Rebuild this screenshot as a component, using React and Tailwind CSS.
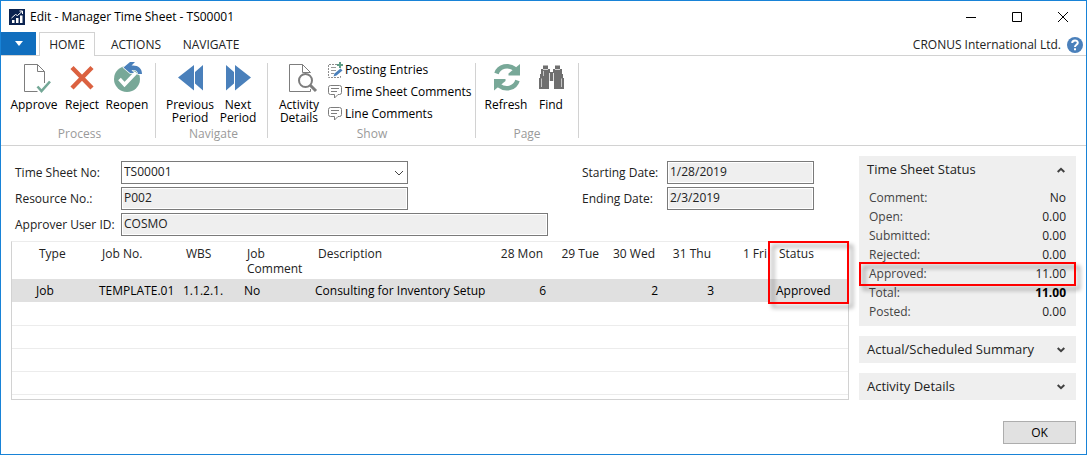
import React from 'react';

const Svg = ({ children, size = 32 }) => (
  <svg width={size} height={size} viewBox={`0 0 ${size} ${size}`} fill="none" className="shrink-0 overflow-visible" aria-hidden="true">
    {children}
  </svg>
);

const ApproveIcon = () => (
  <Svg>
    <path d="M19.5 30.5H6.5V3.5H19.5L26.5 10.5V22M19.5 3.5V10.5H26.5" stroke="#7d7d7d" />
    <path d="M19.5 25.5L23.5 30L32 20.5" stroke="#74a897" strokeWidth="2.6" />
  </Svg>
);
const RejectIcon = () => (
  <Svg>
    <path d="M6 6.500L26 27M26 6.500L6 27" stroke="#db6140" strokeWidth="4.4" />
  </Svg>
);
const ReopenIcon = () => (
  <Svg>
    <circle cx="16" cy="18" r="13" fill="#78a898" />
    <path d="M8.5 18L13.5 23.5L25 11.5" stroke="#fff" strokeWidth="3.6" />
    <path
      d="M12.5 6.5L19 1H24L20.5 4.5C27 4 31 7 31 13H27C26.5 9.5 24.5 8.5 20.5 9L23 12H19Z"
      fill="#4a80bb" stroke="#fff" strokeWidth="1.4" paintOrder="stroke"
    />
  </Svg>
);
const PreviousIcon = () => (
  <Svg>
    <path d="M4 16.5L20 4V29.5ZM21 11L29 4V29.5L21 22.5Z" fill="#4a80bb" />
  </Svg>
);
const NextIcon = () => (
  <Svg>
    <path d="M29 16.5L13 4V29.5ZM12 11L4 4V29.5L12 22.5Z" fill="#4a80bb" />
  </Svg>
);
const ActivityIcon = () => (
  <Svg>
    <path d="M27.5 28V30.5H6.5V3.5H19.5L27.5 11.5H19.5V3.5" stroke="#7d7d7d" />
    <circle cx="22.5" cy="19.5" r="6.5" stroke="#7d7d7d" strokeWidth="2" fill="#fff" />
    <path d="M27 24L33 30" stroke="#7d7d7d" strokeWidth="3" />
  </Svg>
);
const RefreshIcon = () => (
  <Svg>
    <path d="M6.500 12.500C9 5 18.500 3 25 8" stroke="#78a898" strokeWidth="4.6" />
    <path d="M30 3V14.500H18.500V12.500Z" fill="#78a898" />
    <path d="M27.500 19.500C25 27.500 15.500 29.500 9 24.500" stroke="#78a898" strokeWidth="4.6" />
    <path d="M4 29.500V18H15.500V20Z" fill="#78a898" />
  </Svg>
);
const FindIcon = () => (
  <Svg>
    <path
      d="M8 4.500H13V8H15V11H18V8H20V4.500H25V8H27V13H28V17H29V28H19V20H14V28H4V17H5V13H6V8H8Z"
      fill="#6f6f6f"
    />
    <path d="M14.500 12V20M18.500 12V20" stroke="#fff" strokeWidth=".8" />
    <path d="M8 8.500H13M20 8.500H25" stroke="#fff" strokeWidth=".7" />
    <path d="M6.500 17.500V26M8.500 10V15M26.500 17.500V26" stroke="#fff" strokeWidth=".6" />
  </Svg>
);
const PostingIcon = () => (
  <Svg size={16}>
    <path d="M9 2.5H.5V15.5H12.5V13" stroke="#8d8d8d" strokeDasharray="2 1" />
    <path d="M3 5.5H8M3 8.5H8M3 11.5H6" stroke="#9a9a9a" />
    <path d="M12 0V6M9 3H15" stroke="#5f9d86" strokeWidth="2" />
    <path d="M5.5 14.5L6.5 11.5L12.5 6.5L14.5 8.5L8.5 13.5Z" fill="#4a80bb" />
  </Svg>
);
const CommentIcon = () => (
  <Svg size={16}>
    <path
      d="M2.5 1.5H11.5Q13.5 1.5 13.5 3.5V8.5Q13.5 10.5 11.5 10.5H10L6.5 14V10.5H2.5Q.5 10.5 .5 8.5V3.5Q.5 1.5 2.5 1.5Z"
      stroke="#7d7d7d"
    />
    <path d="M3 4.5H11M3 7.5H9" stroke="#7d7d7d" />
  </Svg>
);
const Chevron = ({ up }) => (
  <svg width="8" height="6" viewBox="0 0 8 6" fill="none" aria-hidden="true">
    <path d={up ? 'M.7 5L4 1.8L7.3 5' : 'M.7 1L4 4.2L7.3 1'} stroke="#404040" strokeWidth="2" />
  </svg>
);

const Tool = ({ icon, width = 'w-12', children }) => (
  <button type="button" className={`flex flex-col items-center gap-[5px] text-center leading-[13px] ${width}`}>
    {icon}
    <span>{children}</span>
  </button>
);
const SmallTool = ({ icon, children }) => (
  <button type="button" className="flex h-[22px] items-center gap-px whitespace-nowrap">
    {icon}
    <span>{children}</span>
  </button>
);
const Group = ({ label, className, children }) => (
  <section className={`flex flex-col justify-between border-r border-[#d2d2d2] ${className}`}>
    <div className="-mt-0.5 flex h-16">{children}</div>
    <h2 className="pr-1.5 text-center leading-[8px] text-[#9a9a9a]">{label}</h2>
  </section>
);

const Field = ({ id, label, value, labelWidth, width }) => (
  <div className="flex items-center">
    <label htmlFor={id} className={`shrink-0 ${labelWidth}`}>{label}</label>
    <input
      id={id}
      readOnly
      value={value}
      className={`h-[23px] min-w-0 border border-[#7a7a7a] bg-[#efefef] px-0.5 pb-0.5 shadow-[inset_0_0_0_1px_#fff] outline-none ${width}`}
    />
  </div>
);

const columns = [
  ['Type', 'w-[84px]'], ['Job No.', 'w-[84px]'], ['WBS', 'w-[61px]'], ['Job Comment', 'w-[71px]'], ['Description', ''],
  ['28 Mon', 'w-[56px]'], ['29 Tue', 'w-[56px]'], ['30 Wed', 'w-[56px]'], ['31 Thu', 'w-[56px]'], ['1 Fri', 'w-[56px]'],
  ['Status', 'w-[75px]'],
];
const line = ['Job', 'TEMPLATE.01', '1.1.2.1.', 'No', 'Consulting for Inventory Setup', '6', '', '2', '3', '', 'Approved'];
const isDay = (i) => i > 4 && i < 10;

const status = [
  ['Comment:', 'No'], ['Open:', '0.00'], ['Submitted:', '0.00'], ['Rejected:', '0.00'],
  ['Approved:', '11.00'], ['Total:', '11.00'], ['Posted:', '0.00'],
];

const callout = 'pointer-events-none absolute border-2 border-[#f00] drop-shadow-[4px_4px_2px_rgba(0,0,0,0.4)]';

const PanelHead = ({ title, open }) => (
  <button type="button" aria-expanded={!!open} className="flex h-[27px] w-full items-center justify-between pr-[11px] pl-2 text-[13px]">
    <span>{title}</span>
    <Chevron up={open} />
  </button>
);

export default function App() {
  return (
    <div className="flex min-h-screen flex-col border border-[#1883d7] bg-white font-['Open_Sans','Noto_Sans',sans-serif] text-[12px] text-black">
      <header className="flex h-[31px] items-center justify-between pr-[18px] pl-2">
        <div className="flex items-center gap-[5px]">
          <Svg size={16}>
            <rect width="16" height="16" fill="#0b2350" />
            <path d="M3 14V11H5.500V14ZM7 14V9H9.500V14ZM11 14V6.500H13.500V14Z" fill="#fff" />
            <path d="M2.500 9L6.500 5.500L8.500 6.500L13 2.500M10.500 2H13.500V5" stroke="#fff" />
          </Svg>
          <h1>Edit - Manager Time Sheet - TS00001</h1>
        </div>
        <div className="flex items-center gap-[36px]">
          <button type="button" aria-label="Minimize"><svg width="10" height="10" className="block"><path d="M0 5.5H10" stroke="#000" /></svg></button>
          <button type="button" aria-label="Maximize"><svg width="10" height="10" className="block"><path d="M.5 .5H9.5V9.5H.5Z" fill="none" stroke="#000" /></svg></button>
          <button type="button" aria-label="Close"><svg width="10" height="10" className="block"><path d="M0 0L10 10M10 0L0 10" stroke="#000" /></svg></button>
        </div>
      </header>

      <nav className="flex h-6 items-stretch border-b border-[#d2d2d2]">
        <button type="button" aria-label="Application menu" className="flex w-[35px] items-center justify-center bg-[#106ebe]">
          <svg width="8" height="5"><path d="M0 0H8L4 5Z" fill="#fff" /></svg>
        </button>
        <button type="button" className="-mb-px ml-[3px] w-14 border border-b-0 border-[#d2d2d2] bg-white pt-px text-[#222]">HOME</button>
        <button type="button" className="ml-[11px] w-[60px] pt-[3px] text-[#222]">ACTIONS</button>
        <button type="button" className="ml-3 w-[66px] pt-[3px] text-[#222]">NAVIGATE</button>
        <div className="ml-auto flex items-center gap-1.5 pt-[3px] pr-[3px] text-[#222]">
          <span>CRONUS International Ltd.</span>
          <button type="button" aria-label="Help">
            <svg width="16" height="16" viewBox="0 0 16 16" fill="none" className="block">
              <circle cx="8" cy="8" r="8" fill="#4a80bb" />
              <path d="M5.2 6C5.2 2.6 10.8 2.6 10.8 5.8C10.8 7.8 8 7.7 8 10" stroke="#fff" strokeWidth="2" />
              <path d="M7 11.2H9V13.2H7Z" fill="#fff" />
            </svg>
          </button>
        </div>
      </nav>

      <div className="flex border-b border-[#d2d2d2] pt-[7px] pb-[7px]">
        <Group label="Process" className="h-[75px] w-[155px] pl-[9px]">
          <Tool icon={<ApproveIcon />}>Approve</Tool>
          <Tool icon={<RejectIcon />}>Reject</Tool>
          <Tool icon={<ReopenIcon />} width="w-[42px]">Reopen</Tool>
        </Group>
        <Group label="Navigate" className="w-28 pl-2.5">
          <Tool icon={<PreviousIcon />}>Previous Period</Tool>
          <Tool icon={<NextIcon />}>Next Period</Tool>
        </Group>
        <Group label="Show" className="w-[208px] pl-[7px]">
          <Tool icon={<ActivityIcon />}>Activity Details</Tool>
          <div className="-mt-0.5 ml-[5px]">
            <SmallTool icon={<PostingIcon />}>Posting Entries</SmallTool>
            <SmallTool icon={<CommentIcon />}>Time Sheet Comments</SmallTool>
            <SmallTool icon={<CommentIcon />}>Line Comments</SmallTool>
          </div>
        </Group>
        <Group label="Page" className="w-[103px] pl-[6px]">
          <Tool icon={<RefreshIcon />}>Refresh</Tool>
          <Tool icon={<FindIcon />} width="w-[42px]">Find</Tool>
        </Group>
      </div>

      <main className="flex flex-1 gap-2.5 px-2.5 pt-2.5">
        <div className="min-w-0 flex-1 text-[#222]">
          <form className="flex pt-[5px] pl-1">
            <div className="flex flex-[567_1_0%] flex-col gap-[3px]">
              <div className="flex items-center">
                <label htmlFor="sheet" className="w-[106px] shrink-0">Time Sheet No:</label>
                <div className="relative w-[287px]">
                  <select id="sheet" className="block h-[23px] w-full appearance-none border border-[#7a7a7a] bg-white px-0.5 pb-0.5 outline-none">
                    <option>TS00001</option>
                  </select>
                  <svg width="10" height="6" fill="none" className="pointer-events-none absolute top-[9px] right-1" aria-hidden="true">
                    <path d="M1 1L5 5L9 1" stroke="#444" />
                  </svg>
                </div>
              </div>
              <Field id="resource" label="Resource No.:" value="P002" labelWidth="w-[106px]" width="w-[287px]" />
              <Field id="approver" label="Approver User ID:" value="COSMO" labelWidth="w-[106px]" width="w-[427px]" />
            </div>
            <div className="flex flex-[267_1_0%] flex-col gap-[3px]">
              <Field id="start" label="Starting Date:" value="1/28/2019" labelWidth="w-[85px]" width="w-[147px]" />
              <Field id="end" label="Ending Date:" value="2/3/2019" labelWidth="w-[85px]" width="w-[147px]" />
            </div>
          </form>

          <div className="relative mt-[5px] h-[159px] border border-[#d2d2d2] border-t-[#ececec]">
            <table className="w-full table-fixed border-collapse">
              <thead>
                <tr className="h-[37px]">
                  {columns.map(([name, width], i) => (
                    <th key={name} className={`pt-1 pb-0 align-top font-normal leading-[15px] ${width} ${isDay(i) ? 'pr-[6px] text-right whitespace-nowrap' : i === 0 ? 'pl-[27px] text-left' : 'pl-[6px] text-left'}`}>
                      {name}
                    </th>
                  ))}
                </tr>
              </thead>
              <tbody>
                <tr className="h-[23px] bg-[#e0e0e0] text-black">
                  {line.map((value, i) => (
                    <td key={i} className={`whitespace-nowrap py-0 leading-[22px] ${isDay(i) ? 'pr-[3px] text-right' : i === 0 ? 'pl-6' : 'pl-[3px]'}`}>
                      {value}
                    </td>
                  ))}
                </tr>
                {[0, 1, 2, 3].map((row) => (
                  <tr key={row} className="h-[23px] border-b border-[#ececec]"><td colSpan={11} /></tr>
                ))}
              </tbody>
            </table>
            <div className={`${callout} -top-px -right-px h-[63px] w-[81px]`} />
          </div>
        </div>

        <aside className="w-[217px] shrink-0 text-[#222]">
          <section className="relative h-[170px] bg-[#efefef]">
            <PanelHead title="Time Sheet Status" open />
            <dl className="px-2.5 pt-[5px]">
              {status.map(([name, value]) => (
                <div key={name} className="flex justify-between leading-[19px]">
                  <dt className="text-[#444]">{name}</dt>
                  <dd className={name === 'Total:' ? 'font-bold text-black' : ''}>{value}</dd>
                </div>
              ))}
            </dl>
            <div className={`${callout} inset-x-0 top-[106px] h-6`} />
          </section>
          <section className="mt-2.5 bg-[#efefef]"><PanelHead title="Actual/Scheduled Summary" /></section>
          <section className="mt-2.5 bg-[#efefef]"><PanelHead title="Activity Details" /></section>
        </aside>
      </main>

      <footer className="flex justify-end px-2.5 pb-2.5">
        <button type="button" className="h-[23px] w-[73px] border border-[#adadad] bg-[#e1e1e1]">OK</button>
      </footer>
    </div>
  );
}
